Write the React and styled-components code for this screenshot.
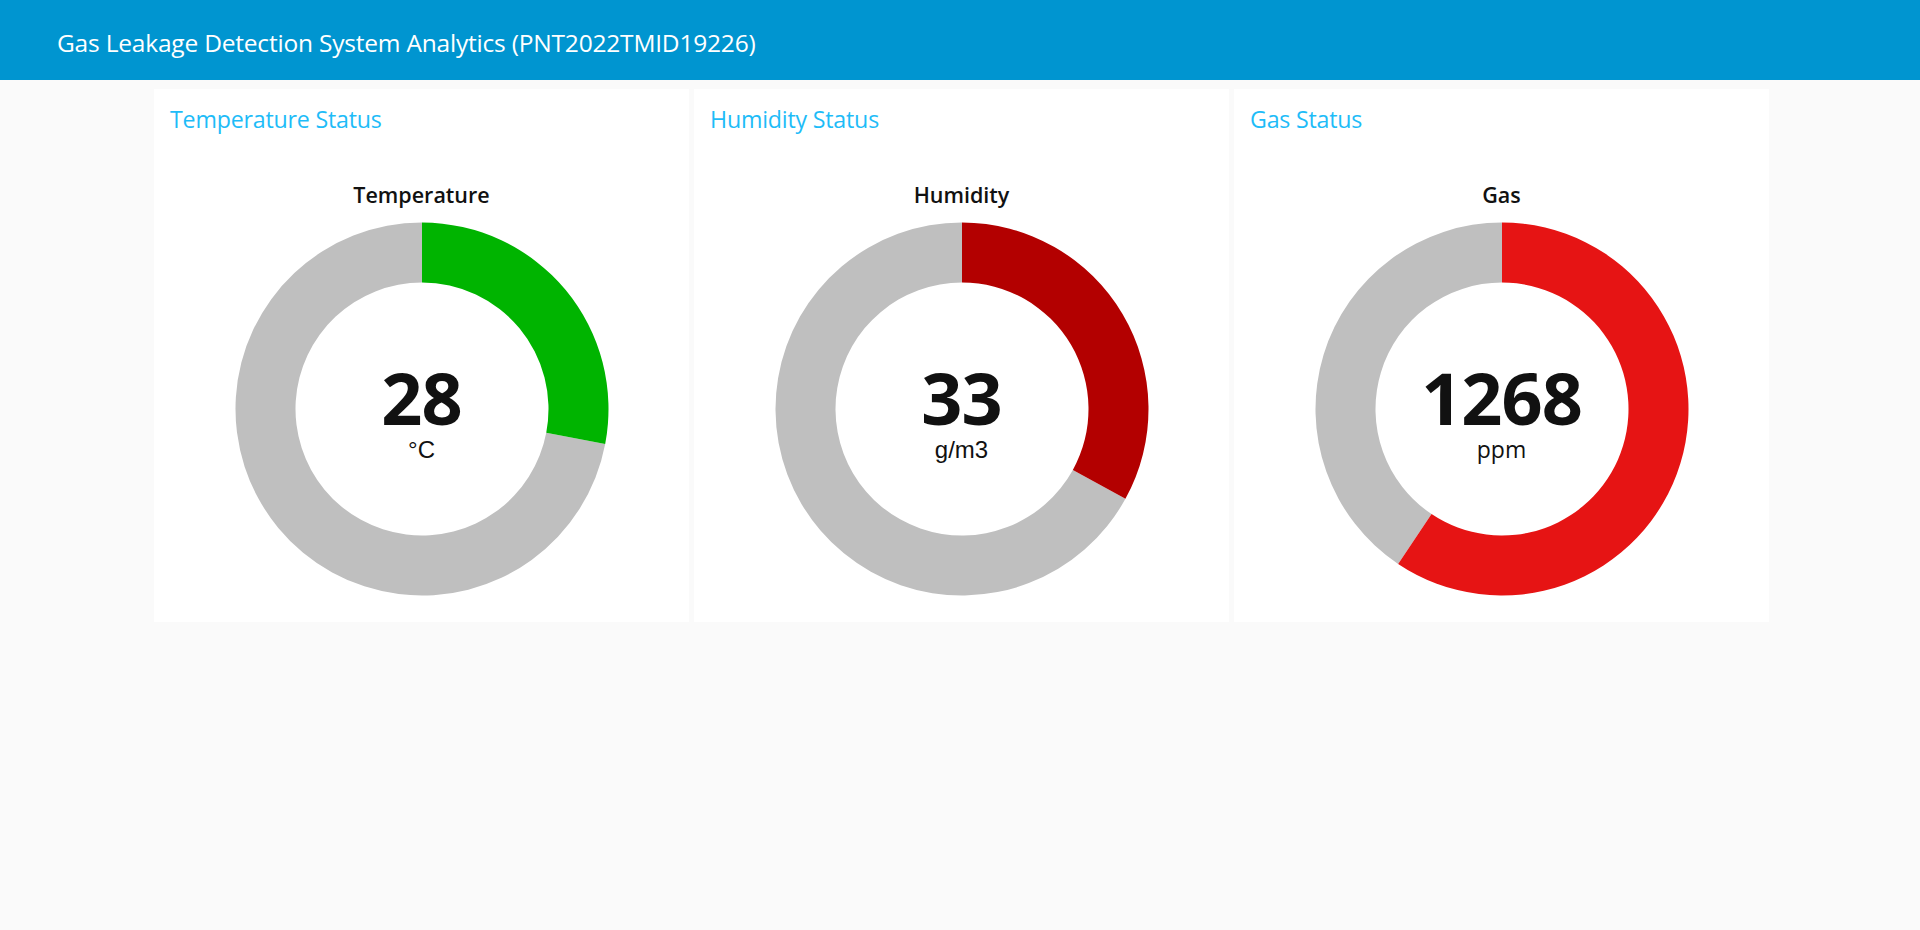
import React from "react";
import styled, { createGlobalStyle } from "styled-components";

const GlobalStyle = createGlobalStyle`
  html, body { margin: 0; padding: 0; background: #fafafa; }
  body { font-family: "Open Sans", "Noto Sans", sans-serif; }
`;

const Header = styled.header`
  height: 80px;
  box-sizing: border-box;
  background: #0095d0;
  display: flex;
  align-items: center;
  padding: 5px 0 0 57px;
  color: #ffffff;
  font-size: 24.5px;
  letter-spacing: -0.2px;
`;

const Grid = styled.main`
  width: 1615px;
  margin: 9px 0 0 154px;
  display: grid;
  grid-template-columns: repeat(3, 535px);
  gap: 5px;
`;

const Card = styled.section`
  background: #ffffff;
  height: 533px;
  box-sizing: border-box;
  padding: 18px 16px 0;
  display: flex;
  flex-direction: column;
`;

const CardTitle = styled.h2`
  margin: 0;
  font-size: 23.2px;
  line-height: 24px;
  font-weight: 400;
  color: #1ebcf8;
  letter-spacing: -0.2px;
`;

const ChartTitle = styled.div`
  margin-top: 52px;
  text-align: center;
  font-size: 21.5px;
  line-height: 24px;
  font-weight: 600;
  color: #111111;
`;

const DonutWrap = styled.div`
  position: relative;
  width: 374px;
  height: 374px;
  margin: 15px auto 0;
`;

const CenterLabel = styled.div`
  position: absolute;
  inset: 0;
  display: flex;
  flex-direction: column;
  align-items: center;
  justify-content: center;
  padding-top: 4px;
  box-sizing: border-box;
  gap: 5px;
`;

const Value = styled.div`
  font-family: "Open Sans", sans-serif;
  font-weight: 700;
  font-size: 72px;
  line-height: 1;
  color: #111111;
  letter-spacing: -1px;
`;

const Unit = styled.div`
  font-family: ${(p) => (p.$alt ? '"Open Sans", sans-serif' : '"Liberation Sans", Arial, sans-serif')};
  font-size: ${(p) => (p.$alt ? "23px" : "24px")};
  line-height: 1;
  color: #111111;
`;

function sector(cx, cy, r0, r1, a0, a1) {
  const pt = (r, a) => {
    const rad = (a - 90) * (Math.PI / 180);
    return [cx + r * Math.cos(rad), cy + r * Math.sin(rad)];
  };
  const large = a1 - a0 > 180 ? 1 : 0;
  const [x0, y0] = pt(r1, a0);
  const [x1, y1] = pt(r1, a1);
  const [x2, y2] = pt(r0, a1);
  const [x3, y3] = pt(r0, a0);
  return `M${x0} ${y0} A${r1} ${r1} 0 ${large} 1 ${x1} ${y1} L${x2} ${y2} A${r0} ${r0} 0 ${large} 0 ${x3} ${y3} Z`;
}

function Donut({ fraction, color, value, unit, altUnit }) {
  const c = 187;
  const r1 = 186.5;
  const r0 = 126.5;
  const a = fraction * 360;
  return (
    <DonutWrap>
      <svg width="374" height="374" viewBox="0 0 374 374">
        <path d={sector(c, c, r0, r1, a, 360)} fill="#bfbfbf" />
        <path d={sector(c, c, r0, r1, 0, a)} fill={color} />
      </svg>
      <CenterLabel>
        <Value>{value}</Value>
        <Unit $alt={altUnit}>{unit}</Unit>
      </CenterLabel>
    </DonutWrap>
  );
}

const cards = [
  { title: "Temperature Status", chart: "Temperature", value: "28", unit: "°C", fraction: 0.28, color: "#00b400" },
  { title: "Humidity Status", chart: "Humidity", value: "33", unit: "g/m3", fraction: 0.33, color: "#b30000" },
  { title: "Gas Status", chart: "Gas", value: "1268", unit: "ppm", fraction: 0.594, color: "#e61414", alt: true },
];

export default function App() {
  return (
    <>
      <GlobalStyle />
      <Header>Gas Leakage Detection System Analytics (PNT2022TMID19226)</Header>
      <Grid>
        {cards.map((c) => (
          <Card key={c.title}>
            <CardTitle>{c.title}</CardTitle>
            <ChartTitle>{c.chart}</ChartTitle>
            <Donut fraction={c.fraction} color={c.color} value={c.value} unit={c.unit} altUnit={c.alt} />
          </Card>
        ))}
      </Grid>
    </>
  );
}
